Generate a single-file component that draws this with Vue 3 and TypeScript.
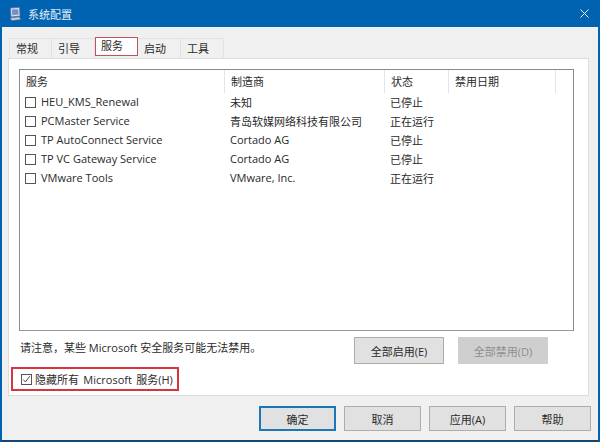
<script setup lang="ts">
const tabs = ['常规', '引导', '服务', '启动', '工具']
const columns = [
  { label: '服务', width: 205 },
  { label: '制造商', width: 160 },
  { label: '状态', width: 64 },
  { label: '禁用日期', width: 107 },
]
const rows = [
  ['HEU_KMS_Renewal', '未知', '已停止'],
  ['PCMaster Service', '青岛软媒网络科技有限公司', '正在运行'],
  ['TP AutoConnect Service', 'Cortado AG', '已停止'],
  ['TP VC Gateway Service', 'Cortado AG', '已停止'],
  ['VMware Tools', 'VMware, Inc.', '正在运行'],
]
const footer = ['确定', '取消', '应用(A)', '帮助']
</script>

<template>
  <div class="window">
    <header class="titlebar">
      <svg class="appicon" width="14" height="14" viewBox="0 0 14 14">
        <path d="M2.5 1 L11.5 0.5 L12 9 L3 10 Z" fill="#dde5f2" stroke="#5f7398" stroke-width=".8" />
        <path d="M4 2.5 L10.3 2.2 L10.6 7.6 L4.3 8.2 Z" fill="#6f8fc8" />
        <path d="M2.5 11 L11.5 10 L12.5 12.5 L3.5 13.5 Z" fill="#c9d1e0" stroke="#6e7a92" stroke-width=".6" />
      </svg>
      <span class="title">系统配置</span>
      <svg class="close" width="9" height="9" viewBox="0 0 9 9">
        <path d="M0.5 0.5 L8.5 8.5 M8.5 0.5 L0.5 8.5" stroke="#e8f0f8" stroke-width="1" fill="none" />
      </svg>
    </header>

    <div class="body">
      <nav class="tabs">
        <div v-for="t in tabs" :key="t" class="tab" :class="{ active: t === '服务' }">{{ t }}</div>
      </nav>

      <section class="panel">
        <div class="list">
          <div class="head">
            <div v-for="c in columns" :key="c.label" class="hcell" :style="{ width: c.width + 'px' }">{{ c.label }}</div>
          </div>
          <div v-for="r in rows" :key="r[0]" class="row">
            <div class="cell first">
              <span class="check"></span>
              <span class="name">{{ r[0] }}</span>
            </div>
            <div class="cell second">{{ r[1] }}</div>
            <div class="cell third">{{ r[2] }}</div>
          </div>
        </div>

        <div class="actions">
          <span class="note">请注意，某些 Microsoft 安全服务可能无法禁用。</span>
          <button class="btn wide">全部启用(E)</button>
          <button class="btn wide disabled">全部禁用(D)</button>
        </div>

        <label class="hide">
          <span class="check checked">
            <svg width="11" height="11" viewBox="0 0 11 11">
              <path d="M1.5 5.5 L4.2 8.5 L9.5 1.5" stroke="#333" stroke-width="1.1" fill="none" />
            </svg>
          </span>
          <span>隐藏所有 Microsoft 服务(H)</span>
        </label>
      </section>

      <footer class="footer">
        <button v-for="(f, i) in footer" :key="f" class="btn foot" :class="{ primary: i === 0 }">{{ f }}</button>
      </footer>
    </div>
  </div>
</template>

<style>
html, body { margin: 0; background: #fff; }
</style>

<style scoped>
.window {
  width: 600px;
  height: 442px;
  box-sizing: border-box;
  display: flex;
  flex-direction: column;
  background: #f0f0f0;
  border: 2px solid #0063b1;
  border-top: 0;
  border-bottom-color: #16456e;
  font-family: "Open Sans", "Noto Sans CJK SC", sans-serif;
  font-size: 11px;
  color: #2a2a2a;
}
.titlebar {
  height: 27px;
  flex: none;
  margin: 0 -2px;
  padding: 0 11px 0 8px;
  display: flex;
  align-items: center;
  background: #0063b1;
  color: #e6eff8;
}
.appicon { flex: none; }
.title { margin-left: 6px; }
.close { margin-left: auto; }
.body {
  flex: 1;
  display: flex;
  flex-direction: column;
  padding: 11px 0 0 6px;
  min-height: 0;
}
.tabs { display: flex; height: 20px; padding-left: 1px; }
.tab {
  width: 43px;
  height: 20px;
  box-sizing: border-box;
  border: 1px solid #e2e2e2;
  border-bottom: 0;
  border-left-width: 0;
  background: #f0f0f0;
  padding-left: 6px;
  line-height: 19px;
}
.tab:first-child { border-left-width: 1px; }
.tab.active {
  background: #fff;
  border: 1px solid #c0545c;
  height: 19px;
  line-height: 15px;
  padding-left: 5px;
  margin-top: -1px;
}
.panel {
  width: 581px;
  height: 338px;
  box-sizing: border-box;
  flex: none;
  background: #fff;
  border: 1px solid #dcdcdc;
  padding: 10px 14px 0 10px;
  display: flex;
  flex-direction: column;
}
.list {
  width: 555px;
  height: 262px;
  flex: none;
  box-sizing: border-box;
  border: 1px solid #8a8a8a;
  border-bottom-color: #9a9a9a;
}
.head { display: flex; height: 23px; }
.hcell {
  box-sizing: border-box;
  padding-left: 6px;
  line-height: 24px;
  border-right: 1px solid #e5e5e5;
  flex: none;
}
.row { display: flex; height: 19px; align-items: center; white-space: nowrap; }
.cell { flex: none; }
.name { margin-bottom: 2px; }
.first { width: 205px; display: flex; align-items: center; padding-left: 5px; box-sizing: border-box; }
.second { width: 160px; padding-left: 5px; box-sizing: border-box; margin-bottom: 2px; }
.third { padding-left: 5px; margin-bottom: 2px; }
.check {
  width: 11px;
  height: 11px;
  box-sizing: border-box;
  flex: none;
  border: 1px solid #555;
  background: #fff;
  margin-right: 5px;
  display: inline-flex;
  align-items: center;
  justify-content: center;
}
.actions {
  display: flex;
  align-items: center;
  height: 27px;
  margin-top: 6px;
  flex: none;
}
.note { margin: 0 0 7px 1px; width: 334px; flex: none; white-space: nowrap; }
.btn {
  box-sizing: border-box;
  font: inherit;
  color: #2a2a2a;
  background: #e1e1e1;
  border: 1px solid #adadad;
  padding: 0;
}
.wide { width: 90px; height: 27px; margin-right: 14px; }
.disabled { background: #cfcfcf; border-color: #cfcfcf; color: #8e8e8e; }
.hide {
  display: flex;
  align-items: center;
  width: 168px;
  height: 24px;
  box-sizing: border-box;
  margin: 3px 0 0 -8px;
  padding-left: 8px;
  border: 2px solid #d8343c;
  white-space: nowrap;
  word-spacing: 1.5px;
}
.hide .check { margin-right: 3px; }
.footer {
  display: flex;
  gap: 8px;
  margin-top: 10px;
  padding-left: 251px;
}
.foot { width: 77px; height: 25px; }
.primary { border: 2px solid #1a78b8; }
</style>
